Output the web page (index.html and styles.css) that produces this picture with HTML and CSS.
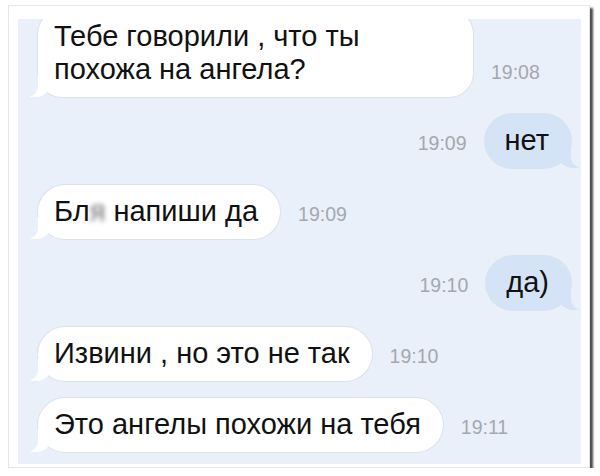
FILE: index.html
```html
<!DOCTYPE html>
<html lang="ru">
<head>
    <meta charset="UTF-8">
    <meta name="viewport" content="width=device-width, initial-scale=1.0">
    <title>Переписка</title>
    <link rel="stylesheet" href="styles.css">
</head>
<body>
    <div class="frame">
        <div class="chat">
            <div class="row in first">
                <div class="bubble">Тебе говорили , что ты<br>похожа на ангела?</div>
                <span class="time">19:08</span>
            </div>
            <div class="row out">
                <span class="time">19:09</span>
                <div class="bubble">нет</div>
            </div>
            <div class="row in">
                <div class="bubble">Бл<span class="censor">я</span> напиши да</div>
                <span class="time">19:09</span>
            </div>
            <div class="row out">
                <span class="time">19:10</span>
                <div class="bubble">да)</div>
            </div>
            <div class="row in">
                <div class="bubble">Извини , но это не так</div>
                <span class="time">19:10</span>
            </div>
            <div class="row in">
                <div class="bubble">Это ангелы похожи на тебя</div>
                <span class="time">19:11</span>
            </div>
        </div>
    </div>
</body>
</html>
```

FILE: styles.css
```css
body {
    margin: 0;
    background-color: #fff;
    font-family: "Liberation Sans", Arial, sans-serif;
}
.frame {
    width: 563px;
    height: 445px;
    margin: 5px 0 0 8px;
    padding: 13px 8px 3px 9px;
    background-color: #fff;
    border: 1px solid #e6e6e6;
    box-shadow: 3px 3px 2px #4a4a4a;
}
.chat {
    height: 100%;
    overflow: hidden;
    background-color: #eaf0f9;
    padding: 0 10px 0 20px;
    box-sizing: border-box;
    display: flex;
    flex-direction: column;
    gap: 17px;
}
.row {
    display: flex;
    align-items: last baseline;
    gap: 18px;
}
.row.out {
    justify-content: flex-end;
}
.row.first {
    margin-top: -9px;
}
.bubble {
    position: relative;
    padding: 10px 22px 11px 16px;
    font-size: 29px;
    line-height: 33px;
    color: #111;
    background-color: #fff;
    border-radius: 27px;
    box-shadow: 0 0 0 1px rgba(150, 165, 185, 0.18);
}
.first .bubble {
    width: 397px;
    border-radius: 24px;
}
.out .bubble {
    background-color: #d4e3f5;
    padding: 10px 22px 11px 20px;
}
.bubble::before,
.bubble::after {
    content: "";
    position: absolute;
    bottom: 0;
    height: 22px;
}
.in .bubble::before {
    left: -8px;
    width: 22px;
    background-color: #fff;
    border-bottom-right-radius: 16px;
}
.in .bubble::after {
    left: -12px;
    width: 12px;
    background-color: #eaf0f9;
    border-bottom-right-radius: 11px;
}
.out .bubble::before {
    right: -8px;
    width: 22px;
    background-color: #d4e3f5;
    border-bottom-left-radius: 16px;
}
.out .bubble::after {
    right: -12px;
    width: 12px;
    background-color: #eaf0f9;
    border-bottom-left-radius: 11px;
}
.time {
    font-size: 19.5px;
    color: #a3a8b0;
}
.censor {
    display: inline-block;
    color: #6f6f6f;
    filter: blur(2.5px);
}
```
